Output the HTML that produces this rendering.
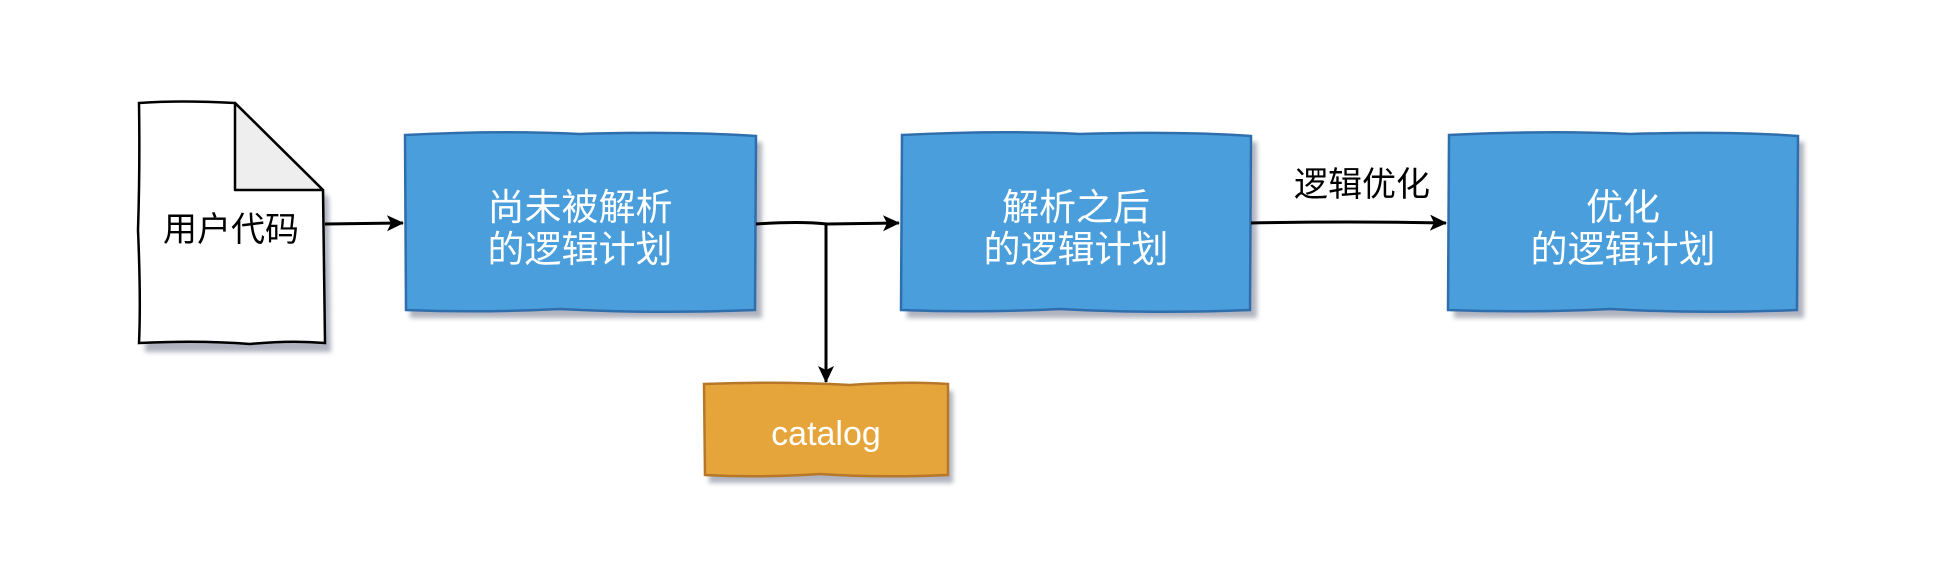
<!DOCTYPE html>
<html><head><meta charset="utf-8"><style>
html,body{margin:0;padding:0;background:#fff}
svg{display:block}
text{font-family:"Liberation Sans","Noto Sans CJK SC",sans-serif}
</style></head><body>
<svg width="1944" height="582" viewBox="0 0 1944 582" xmlns="http://www.w3.org/2000/svg">
<defs>
<filter id="sh" x="-10%" y="-10%" width="130%" height="140%"><feGaussianBlur stdDeviation="2.5"/></filter>
<marker id="ar" markerWidth="18" markerHeight="18" refX="16" refY="9" orient="auto" markerUnits="userSpaceOnUse"><path d="M0,1 L17,9 L0,17 L4,9 z" fill="#000"/></marker>
</defs>
<!-- shadows -->
<g fill="#7d8296" opacity="0.6" filter="url(#sh)">
<path d="M145,112 L241,112 L329,198 L331,352 L145,352 z"/>
<rect x="410" y="142" width="352" height="176"/>
<rect x="907" y="142" width="350" height="176"/>
<rect x="1454" y="142" width="350" height="176"/>
<rect x="709" y="391" width="244" height="92"/>
</g>
<!-- document -->
<path d="M139,103 Q180,100 235,103 L323,190 L325,343 Q290,340 250,344 Q200,340 139,343 Q141,300 138,230 Q140,170 139,103 z" fill="#fff" stroke="#000" stroke-width="2.5"/>
<path d="M235,103 L235,190 L323,190 z" fill="#eee" stroke="#000" stroke-width="2.5" stroke-linejoin="round"/>
<text x="231" y="241" font-size="34" text-anchor="middle" fill="#000">用户代码</text>
<!-- boxes -->
<g stroke-width="2.5">
<path d="M405,135 Q500,130 580,134 Q680,131 756,136 L755,310 Q650,314 560,309 Q480,313 406,310 z" fill="#4A9EDC" stroke="#2F6EAC"/>
<path d="M902,135 Q1000,130 1080,134 Q1180,131 1251,136 L1250,310 Q1150,314 1060,309 Q980,313 901,310 z" fill="#4A9EDC" stroke="#2F6EAC"/>
<path d="M1449,135 Q1550,130 1630,134 Q1730,131 1798,136 L1797,310 Q1700,314 1610,309 Q1530,313 1448,310 z" fill="#4A9EDC" stroke="#2F6EAC"/>
<path d="M704,384 Q780,381 850,385 Q910,381 948,384 L948,475 Q880,478 820,474 Q760,478 705,475 z" fill="#E5A53B" stroke="#B67828"/>
</g>
<g fill="#fff" font-size="37" text-anchor="middle">
<text x="580" y="220">尚未被解析</text>
<text x="580" y="262">的逻辑计划</text>
<text x="1076" y="220">解析之后</text>
<text x="1076" y="262">的逻辑计划</text>
<text x="1623" y="220">优化</text>
<text x="1623" y="262">的逻辑计划</text>
<text x="826" y="445" font-size="34">catalog</text>
</g>
<!-- arrows -->
<g stroke="#000" stroke-width="3" fill="none">
<path d="M325,224 L403,223" marker-end="url(#ar)"/>
<path d="M756,224 Q800,221 827,224 L899,223" marker-end="url(#ar)"/>
<path d="M826,224 L826,382" marker-end="url(#ar)"/>
<path d="M1251,223 Q1350,221 1446,223" marker-end="url(#ar)"/>
</g>
<text x="1362" y="196" font-size="34" text-anchor="middle" fill="#000">逻辑优化</text>
</svg>
</body></html>
